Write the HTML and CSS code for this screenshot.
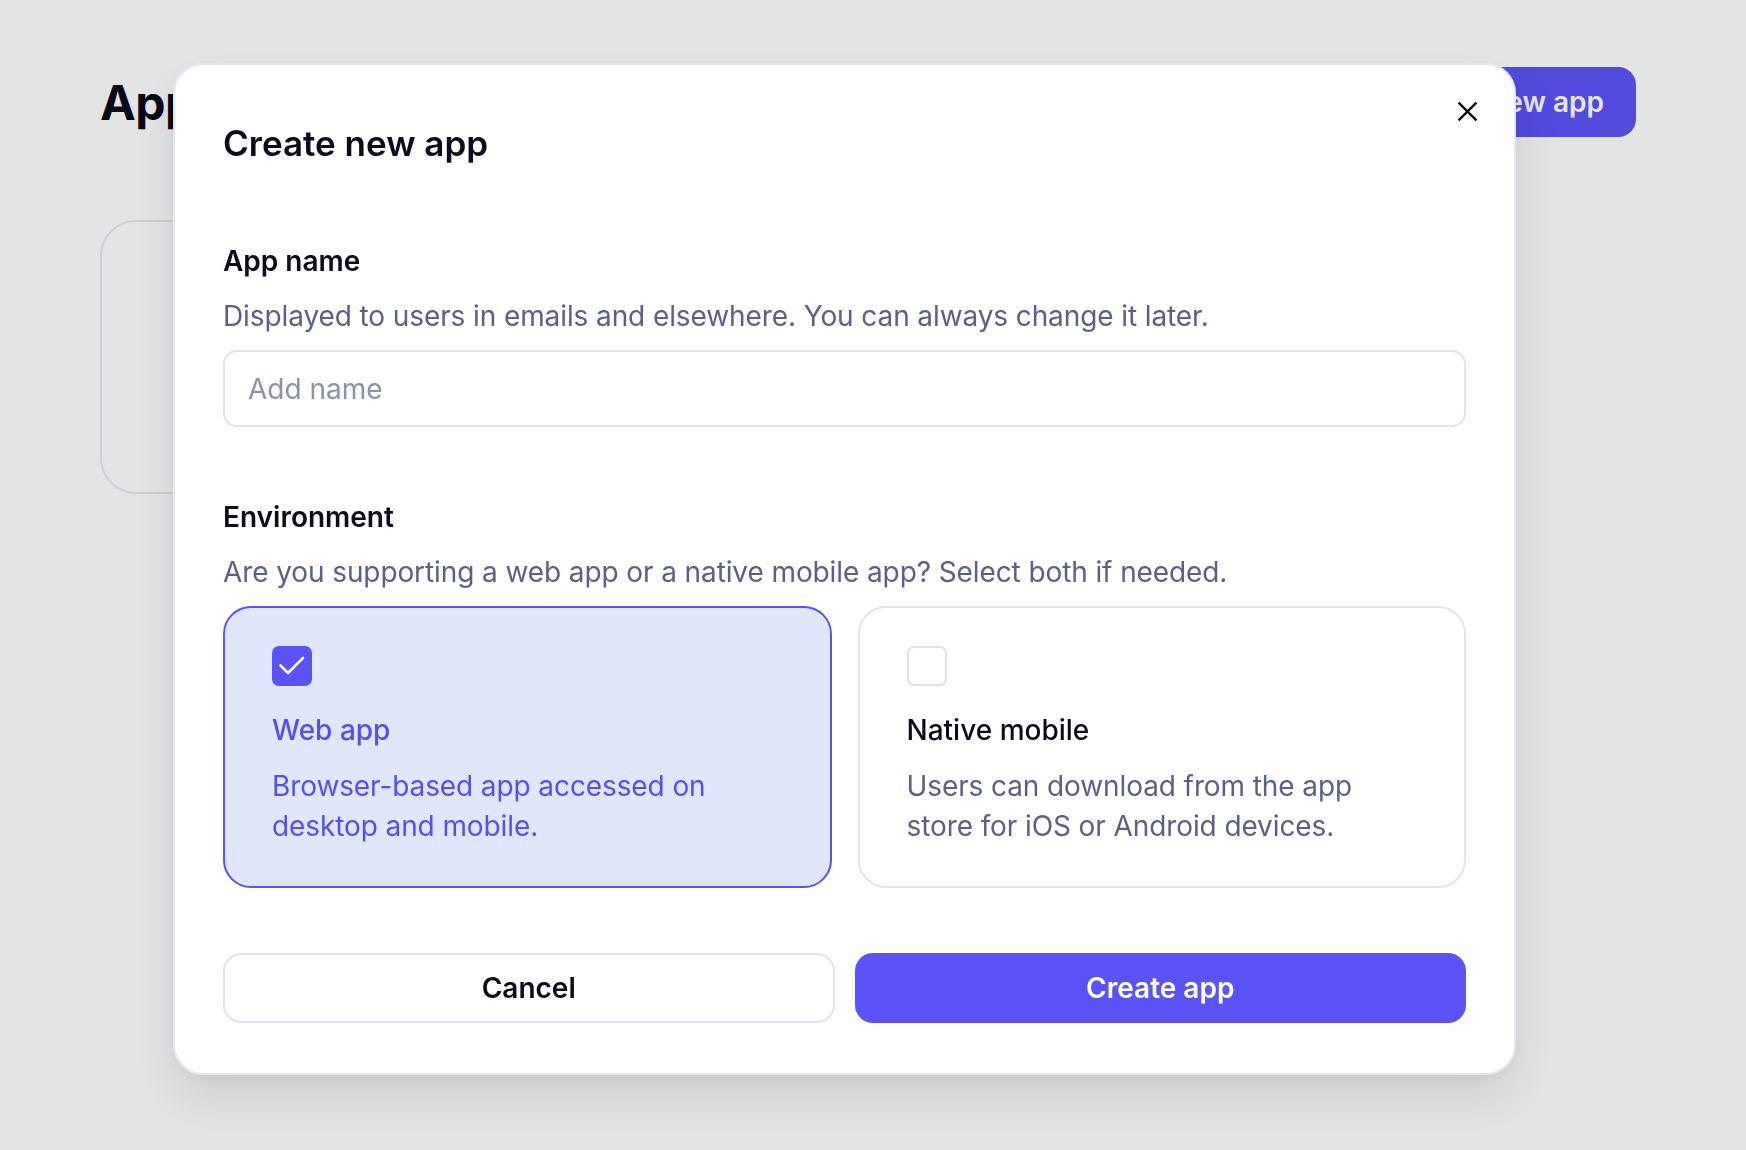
FILE: index.html
```html
<!DOCTYPE html>
<html lang="en">
<head>
<meta charset="utf-8">
<title>Apps</title>
<link rel="stylesheet" href="styles.css">
</head>
<body>
<div class="page">
  <header class="page-head">
    <h1 class="page-title">Apps</h1>
    <button class="btn-new">New app</button>
  </header>
  <div class="app-card"></div>
</div>

<div class="overlay"></div>

<div class="modal" role="dialog" aria-labelledby="modal-title">
  <button class="close" aria-label="Close">
    <svg viewBox="0 0 20 20" width="21" height="21"><path d="M1.5 1.5 L18.5 18.5 M18.5 1.5 L1.5 18.5" stroke="#0b0b1e" stroke-width="2.3" fill="none"/></svg>
  </button>
  <h2 class="modal-title" id="modal-title">Create new app</h2>

  <section class="field field-name">
    <div class="label">App name</div>
    <p class="help">Displayed to users in emails and elsewhere. You can always change it later.</p>
    <input class="text-input" type="text" placeholder="Add name">
  </section>

  <section class="field field-env">
    <div class="label">Environment</div>
    <p class="help">Are you supporting a web app or a native mobile app? Select both if needed.</p>
    <div class="options">
      <div class="option selected">
        <span class="check checked">
          <svg viewBox="0 0 40 40" width="40" height="40"><path d="M8.5 19.5 L16 27 L31 12" stroke="#fff" stroke-width="2.6" fill="none" stroke-linecap="round" stroke-linejoin="round"/></svg>
        </span>
        <div class="opt-title">Web app</div>
        <p class="opt-desc">Browser-based app accessed on desktop and mobile.</p>
      </div>
      <div class="option">
        <span class="check"></span>
        <div class="opt-title">Native mobile</div>
        <p class="opt-desc">Users can download from the app store for iOS or Android devices.</p>
      </div>
    </div>
  </section>

  <div class="actions">
    <button class="btn btn-cancel">Cancel</button>
    <button class="btn btn-primary">Create app</button>
  </div>
</div>
</body>
</html>
```

FILE: styles.css
```css
* { box-sizing: border-box; }

html, body {
  margin: 0;
  padding: 0;
  height: 100%;
}

body {
  background: #fdffff;
  font-family: Inter, "Noto Sans", sans-serif;
  color: #0b0b1e;
  overflow: hidden;
}

.page {
  padding: 67px 110px 0 100px;
}

.page-head {
  display: flex;
  justify-content: space-between;
  align-items: center;
  height: 70px;
}

.page-title {
  margin: 0;
  font-size: 48px;
  font-weight: 700;
  letter-spacing: -0.5px;
}

.btn-new {
  height: 70px;
  padding: 0 32px;
  border: none;
  border-radius: 18px;
  background: #5b53f5;
  color: #fff;
  font: 600 28px Inter, sans-serif;
}

.app-card {
  margin-top: 83px;
  width: 400px;
  height: 274px;
  border: 2px solid #e4e5f2;
  border-radius: 36px;
}

.overlay {
  position: fixed;
  inset: 0;
  background: rgba(0, 0, 0, 0.1);
}

.modal {
  position: absolute;
  left: 173px;
  top: 63px;
  width: 1343px;
  background: #fff;
  border: 2px solid #e6e6f2;
  border-radius: 30px;
  padding: 50px 48px 50px 48px;
  box-shadow: 0 24px 48px rgba(0, 0, 0, 0.10), 0 4px 12px rgba(0, 0, 0, 0.04);
}

.close {
  position: absolute;
  right: 36px;
  top: 35px;
  width: 22px;
  height: 22px;
  padding: 0;
  border: none;
  background: none;
  display: flex;
  align-items: center;
  justify-content: center;
}

.close svg { display: block; }

.modal-title {
  margin: 0;
  font-size: 35px;
  line-height: 56px;
  font-weight: 600;
}

.field-name { margin-top: 73px; }
.field-env { margin-top: 73px; }

.label {
  font-size: 28px;
  line-height: 34px;
  font-weight: 600;
}

.help {
  margin: 20px 0 16px;
  font-size: 28px;
  line-height: 36px;
  color: #5d6086;
  letter-spacing: -0.1px;
}

.text-input {
  display: block;
  width: 100%;
  height: 77px;
  border: 2px solid #e3e3f0;
  border-radius: 14px;
  padding: 0 23px;
  font: 400 28px Inter, sans-serif;
  color: #0b0b1e;
  outline: none;
}

.text-input::placeholder { color: #8c91a5; }

.options {
  display: grid;
  grid-template-columns: 1fr 1fr;
  gap: 26px;
}

.option {
  border: 2px solid #e3e3f0;
  border-radius: 28px;
  padding: 38px 56px 38px 47px;
  min-height: 282px;
}

.option.selected {
  background: #e0e6fb;
  border-color: #5b53f5;
}

.check {
  display: block;
  width: 40px;
  height: 40px;
  border: 2px solid #e0dff0;
  border-radius: 7px;
  background: #fff;
}

.check.checked {
  background: #5b53f5;
  border: none;
}

.check svg { display: block; }

.opt-title {
  margin-top: 26px;
  font-size: 28px;
  line-height: 36px;
  font-weight: 500;
  color: #0b0b1e;
}

.opt-desc {
  margin: 18px 0 0;
  font-size: 28px;
  line-height: 40px;
  color: #5d6086;
  letter-spacing: -0.1px;
}

.option.selected .opt-title,
.option.selected .opt-desc {
  color: #564ff0;
}

.actions {
  margin-top: 65px;
  display: grid;
  grid-template-columns: 1fr 1fr;
  gap: 20px;
}

.btn {
  height: 70px;
  border-radius: 18px;
  font: 600 28px Inter, sans-serif;
}

.btn-cancel {
  background: #fff;
  border: 2px solid #e3e3f0;
  color: #0b0b1e;
}

.btn-primary {
  background: #5b53f5;
  border: none;
  color: #fff;
}
```
